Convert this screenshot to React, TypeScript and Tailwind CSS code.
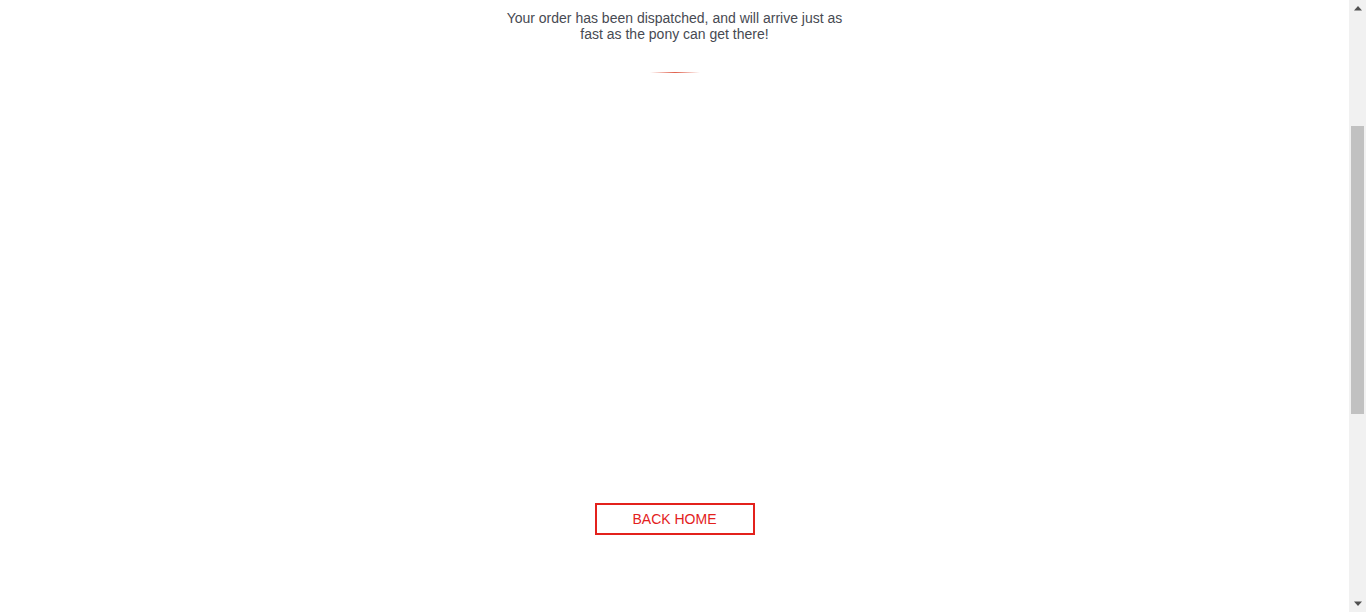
import React from 'react';

// browser-style scrollbar, since the capture shows the page part-way scrolled
const Scrollbar = (): JSX.Element => (
  <aside aria-hidden className="flex h-full w-[17px] shrink-0 flex-col bg-[#f1f1f1]">
    <div className="flex h-[17px] items-center justify-center">
      <svg width="8" height="5" viewBox="0 0 8 5">
        <path d="M4 0 L8 4.5 L0 4.5 Z" fill="#505050" />
      </svg>
    </div>
    <div className="flex flex-1 flex-col px-[2px] pt-[109px]">
      <div className="h-[288px] w-full bg-[#c1c1c1]" />
    </div>
    <div className="flex h-[17px] items-center justify-center">
      <svg width="8" height="5" viewBox="0 0 8 5">
        <path d="M0 0.5 L8 0.5 L4 5 Z" fill="#505050" />
      </svg>
    </div>
  </aside>
);

export default function App() {
  return (
    <div className="flex h-[612px] w-full overflow-hidden bg-white font-['Liberation_Sans',Arial,sans-serif]">
      <main className="flex flex-1 flex-col items-center pt-[10px]">
        <p className="w-[350px] text-center text-sm leading-[16px] text-[#474a52]">
          Your order has been dispatched, and will arrive just as fast as the
          pony can get there!
        </p>
        <div className="mt-[30px] h-px w-[50px] bg-gradient-to-r from-transparent via-[#e0604c] to-transparent" />
        <div className="h-[430px] w-full" />
        <button className="h-[32px] w-[160px] border-2 border-[#e3211c] bg-white text-sm text-[#e3211c]">
          BACK HOME
        </button>
      </main>
      <Scrollbar />
    </div>
  );
}
